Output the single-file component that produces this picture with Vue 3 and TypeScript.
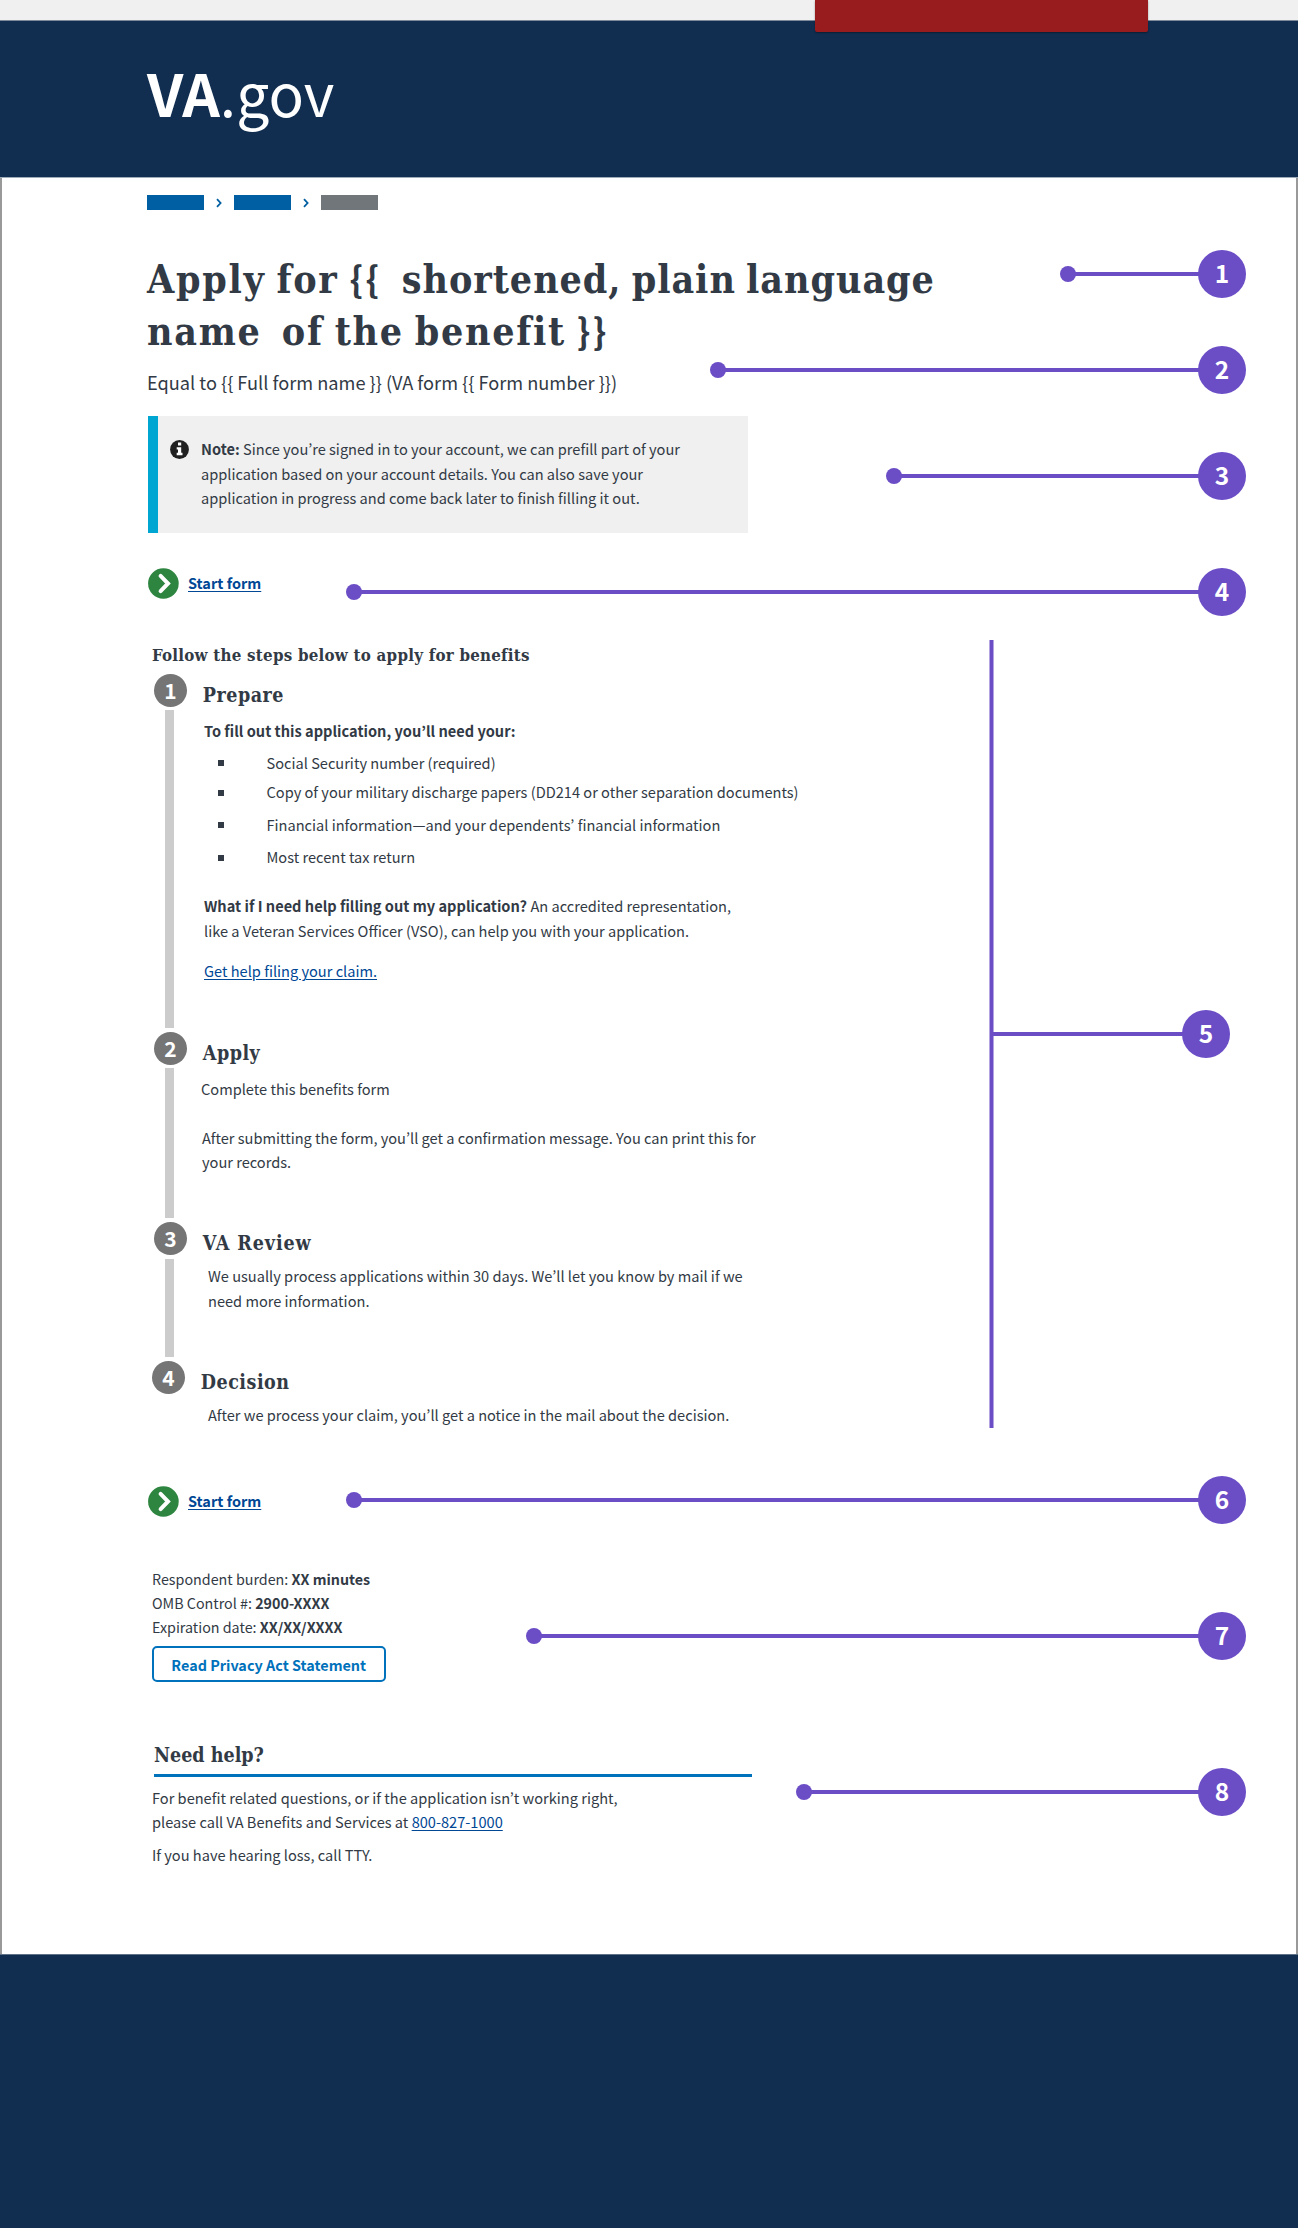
<script setup lang="ts">
interface Callout {
  label: string
  center: number
  y: number
  start: number
  dot: boolean
}

interface Segment {
  text: string
  kind: 'wide' | 'normal' | 'brace'
}

const titleLines: Segment[][] = [
  [
    { text: 'Apply for ', kind: 'wide' },
    { text: '{{', kind: 'brace' },
    { text: '  shortened, plain language', kind: 'normal' },
  ],
  [
    { text: 'name', kind: 'wide' },
    { text: '  ', kind: 'normal' },
    { text: 'of the benefit ', kind: 'wide' },
    { text: '}}', kind: 'brace' },
  ],
]
const subtitle = 'Equal to {{ Full form name }} (VA form {{ Form number }})'

const documents = [
  'Social Security number (required)',
  'Copy of your military discharge papers (DD214 or other separation documents)',
  'Financial information—and your dependents’ financial information',
  'Most recent tax return',
]

const callouts: Callout[] = [
  { label: '1', center: 1222, y: 274, start: 1068, dot: true },
  { label: '2', center: 1222, y: 370, start: 718, dot: true },
  { label: '3', center: 1222, y: 476, start: 894, dot: true },
  { label: '4', center: 1222, y: 592, start: 354, dot: true },
  { label: '5', center: 1206, y: 1034, start: 992, dot: false },
  { label: '6', center: 1222, y: 1500, start: 354, dot: true },
  { label: '7', center: 1222, y: 1636, start: 534, dot: true },
  { label: '8', center: 1222, y: 1792, start: 804, dot: true },
]
</script>

<template>
  <div class="page">
    <div class="topbar"><div class="tab"></div></div>
    <header class="masthead">
      <div class="logo"><b>VA</b><span>.gov</span></div>
    </header>

    <main class="content">
      <nav class="crumbs">
        <i class="crumb"></i>
        <svg class="sep" viewBox="0 0 6 10"><path d="M1 1.2 4.6 5 1 8.8" /></svg>
        <i class="crumb"></i>
        <svg class="sep" viewBox="0 0 6 10"><path d="M1 1.2 4.6 5 1 8.8" /></svg>
        <i class="crumb current"></i>
      </nav>

      <h1 class="slab title">
        <span v-for="(line, i) in titleLines" :key="i" class="line"><span v-for="seg in line" :key="seg.text" :class="seg.kind">{{ seg.text }}</span></span>
      </h1>
      <p class="subtitle">{{ subtitle }}</p>

      <aside class="note">
        <svg class="info" viewBox="0 0 19 19">
          <circle cx="9.5" cy="9.5" r="9.4" fill="#212121" />
          <path fill="#fff" d="M8 2.6h3.2v2.8H8zM6.7 7.2h4.5v5.6h1.3v2.4H6.7v-2.4H8V9.5H6.7z" />
        </svg>
        <p>
          <b>Note:</b> Since you’re signed in to your account, we can prefill part of your<br />
          application based on your account details. You can also save your<br />
          application in progress and come back later to finish filling it out.
        </p>
      </aside>

      <a class="start">
        <svg viewBox="0 0 31 31"><circle cx="15.4" cy="15.5" r="15.3" fill="#2e8540" /><path d="M12.6 7.9 20 15.5l-7.4 7.6" /></svg>
        <span>Start form</span>
      </a>

      <h2 class="slab lead">Follow the steps below to apply for benefits</h2>

      <ol class="steps">
        <li class="step one">
          <div class="rail"><span class="num">1</span><i></i></div>
          <div class="body">
            <h3 class="slab">Prepare</h3>
            <p class="need"><b>To fill out this application, you’ll need your:</b></p>
            <ul class="docs">
              <li v-for="doc in documents" :key="doc">{{ doc }}</li>
            </ul>
            <p class="help">
              <b>What if I need help filling out my application?</b> An accredited representation,<br />
              like a Veteran Services Officer (VSO), can help you with your application.
            </p>
            <p class="claim"><a class="link">Get help filing your claim.</a></p>
          </div>
        </li>
        <li class="step two">
          <div class="rail"><span class="num">2</span><i></i></div>
          <div class="body">
            <h3 class="slab">Apply</h3>
            <p class="complete">Complete this benefits form</p>
            <p class="after">
              After submitting the form, you’ll get a confirmation message. You can print this for<br />your records.
            </p>
          </div>
        </li>
        <li class="step three">
          <div class="rail"><span class="num">3</span><i></i></div>
          <div class="body">
            <h3 class="slab">VA Review</h3>
            <p class="review">
              We usually process applications within 30 days. We’ll let you know by mail if we<br />need more information.
            </p>
          </div>
        </li>
        <li class="step four">
          <div class="rail"><span class="num">4</span></div>
          <div class="body">
            <h3 class="slab">Decision</h3>
            <p class="decision">After we process your claim, you’ll get a notice in the mail about the decision.</p>
          </div>
        </li>
      </ol>

      <a class="start second">
        <svg viewBox="0 0 31 31"><circle cx="15.4" cy="15.5" r="15.3" fill="#2e8540" /><path d="M12.6 7.9 20 15.5l-7.4 7.6" /></svg>
        <span>Start form</span>
      </a>

      <section class="burden">
        <p>Respondent burden: <b>XX minutes</b></p>
        <p>OMB Control #: <b>2900-XXXX</b></p>
        <p>Expiration date: <b>XX/XX/XXXX</b></p>
        <button type="button">Read Privacy Act Statement</button>
      </section>

      <section class="needhelp">
        <h3 class="slab">Need help?</h3>
        <p class="q">
          For benefit related questions, or if the application isn’t working right,<br />
          please call VA Benefits and Services at <a class="link">800-827-1000</a>
        </p>
        <p class="tty">If you have hearing loss, call TTY.</p>
      </section>
    </main>

    <footer class="footer"></footer>

    <svg class="callouts" viewBox="0 0 1298 2228">
      <path d="M991.5 640V1428" />
      <g v-for="c in callouts" :key="c.label">
        <path :d="`M${c.start} ${c.y}H${c.center}`" />
        <circle v-if="c.dot" :cx="c.start" :cy="c.y" r="8" />
        <circle :cx="c.center" :cy="c.y" r="24" />
        <text :x="c.center" :y="c.y + 8.5">{{ c.label }}</text>
      </g>
    </svg>
  </div>
</template>

<style>
body {
  background: #fff;
}
</style>

<style scoped>
.page {
  position: relative;
  width: 1298px;
  height: 2228px;
  overflow: hidden;
  color: #323a45;
  font: 14.6px/24px 'Noto Sans CJK KR', 'Open Sans', sans-serif;
}
p,
h1,
h2,
h3,
ol,
ul {
  margin: 0;
  padding: 0;
  list-style: none;
}
p {
  white-space: nowrap;
}
.topbar {
  height: 20px;
  background: #f0f0f0;
  border-bottom: 1px solid #7d8a99;
}
.tab {
  position: relative;
  width: 333px;
  height: 32px;
  margin-left: 815px;
  background: #981b1e;
  border-radius: 0 0 2px 2px;
  box-shadow: 0 1px 2px rgba(0, 0, 0, 0.4);
}
.masthead {
  height: 156px;
  padding-left: 147px;
  background: #112e51;
  border-bottom: 1px solid #a0abb9;
}
.logo {
  display: inline-block;
  padding-top: 25px;
  color: #fff;
  font-size: 58.7px;
  line-height: 92px;
}
.content {
  box-sizing: border-box;
  height: 1776px;
  padding: 17.4px 0 0 145px;
  border: 2px solid #999;
  border-width: 0 2px;
}
.crumbs {
  display: flex;
  align-items: center;
  height: 14.6px;
}
.crumb {
  width: 57px;
  height: 14.6px;
  background: #005ea2;
}
.current {
  background: #71767a;
}
.sep {
  width: 6px;
  height: 10px;
  margin: 0 12px;
  fill: none;
  stroke: #005ea2;
  stroke-width: 1.8;
}
.slab {
  font-family: 'DejaVu Serif Condensed', 'DejaVu Serif', serif;
  font-stretch: condensed;
  font-weight: 700;
}
.title {
  margin-top: 43px;
  font-size: 39px;
  line-height: 52px;
  word-spacing: -3px;
}
.line {
  display: block;
  height: 52px;
  white-space: pre;
}
.normal {
  letter-spacing: 0.95px;
}
.wide {
  letter-spacing: 1.7px;
}
.brace {
  font-family: 'Noto Sans CJK KR', sans-serif;
  font-size: 36px;
  line-height: 1;
  letter-spacing: 2.4px;
}
.subtitle {
  margin-top: 11px;
  font-size: 18.2px;
  line-height: 28px;
}
.note {
  display: flex;
  box-sizing: border-box;
  width: 600px;
  height: 117px;
  margin: 20px 0 0 1px;
  padding: 21px 0 0 12px;
  background: #f0f0f0;
  border-left: 10px solid #00a6d2;
  line-height: 24.6px;
}
.info {
  width: 19px;
  height: 19px;
  margin: 3.2px 12px 0 0;
}
.start {
  display: flex;
  align-items: center;
  height: 31px;
  margin: 35px 0 0 1px;
  color: #004795;
  font-weight: 700;
}
.start svg {
  width: 31px;
  height: 31px;
  margin-right: 9px;
}
.start path {
  fill: none;
  stroke: #fff;
  stroke-width: 4;
  stroke-linecap: round;
}
.start span {
  margin-top: -1px;
  font-size: 14.5px;
  text-decoration: underline;
  text-underline-offset: 2px;
}
.lead {
  margin: 44px 0 0 5px;
  font-size: 16.8px;
  line-height: 24px;
  letter-spacing: 0.24px;
}
.steps {
  margin: 7px 0 0 7px;
}
.step {
  display: flex;
}
.one {
  height: 358px;
}
.two {
  height: 190.5px;
}
.three {
  height: 138.5px;
}
.four {
  height: 65px;
  margin-left: -2px;
}
.rail {
  display: flex;
  flex-direction: column;
  width: 33px;
  flex: none;
}
.num {
  width: 33px;
  height: 33px;
  border-radius: 50%;
  background: #757575;
  color: #fff;
  font: 700 21px/33px 'Noto Sans CJK KR', sans-serif;
  text-align: center;
}
.rail i {
  flex: 1;
  width: 8.5px;
  margin: 3.5px 0 4px 11px;
  background: #ccc;
}
.body {
  padding: 9px 0 0 16.5px;
}
.body h3,
.needhelp h3 {
  font-size: 19.5px;
  line-height: 26px;
  letter-spacing: 0.5px;
}
.body h3 {
  margin-left: -0.7px;
}
.three h3 {
  letter-spacing: 0.9px;
}
.need {
  margin: 10px 0 0 0.5px;
}
.docs {
  margin-top: 8px;
}
.docs li {
  display: flex;
  align-items: center;
  height: 24px;
  margin-bottom: 8.5px;
}
.docs li:first-child {
  margin-bottom: 5.3px;
}
.docs li::before {
  content: '';
  width: 6px;
  height: 6px;
  margin: 1px 43px 0 14px;
  background: #323a45;
}
.help {
  margin: 24px 0 0 0.5px;
  line-height: 25px;
}
.claim {
  margin: 15.8px 0 0 0.5px;
}
.link {
  color: #004795;
  text-decoration: underline;
  text-underline-offset: 2px;
}
.complete {
  margin: 10px 0 0 -2.5px;
}
.after {
  margin: 25.3px 0 0 -1.5px;
}
.review {
  margin: 6.5px 0 0 4.5px;
  line-height: 24.7px;
}
.decision {
  margin: 7px 0 0 6.5px;
}
.second {
  margin-top: 60px;
}
.burden {
  margin: 50.3px 0 0 5px;
}
.burden p {
  font-size: 14.3px;
}
.burden button {
  display: flex;
  align-items: center;
  justify-content: center;
  box-sizing: border-box;
  width: 234.5px;
  height: 36px;
  margin: 7.2px 0 0 -0.5px;
  padding: 2px 0 0;
  border: 2px solid #0071bb;
  border-radius: 5px;
  background: #fff;
  color: #0071bb;
  font: inherit;
  font-size: 14.4px;
  font-weight: 700;
}
.needhelp {
  width: 600px;
  margin: 60.3px 0 0 5px;
}
.needhelp h3 {
  margin-left: 2px;
  padding-bottom: 5.5px;
  border-bottom: 3px solid #0071bb;
  letter-spacing: 0;
}
.q {
  margin-top: 9px;
}
.tty {
  margin-top: 8.8px;
}
.footer {
  box-sizing: border-box;
  height: 274px;
  background: #112e51;
  border-top: 1px solid #5f7388;
}
.callouts {
  position: absolute;
  inset: 0;
  width: 1298px;
  height: 2228px;
  fill: #6b4dc6;
}
.callouts path {
  stroke: #6b4dc6;
  stroke-width: 4;
}
.callouts text {
  fill: #fff;
  font-size: 24.5px;
  font-weight: 700;
  text-anchor: middle;
}
</style>
